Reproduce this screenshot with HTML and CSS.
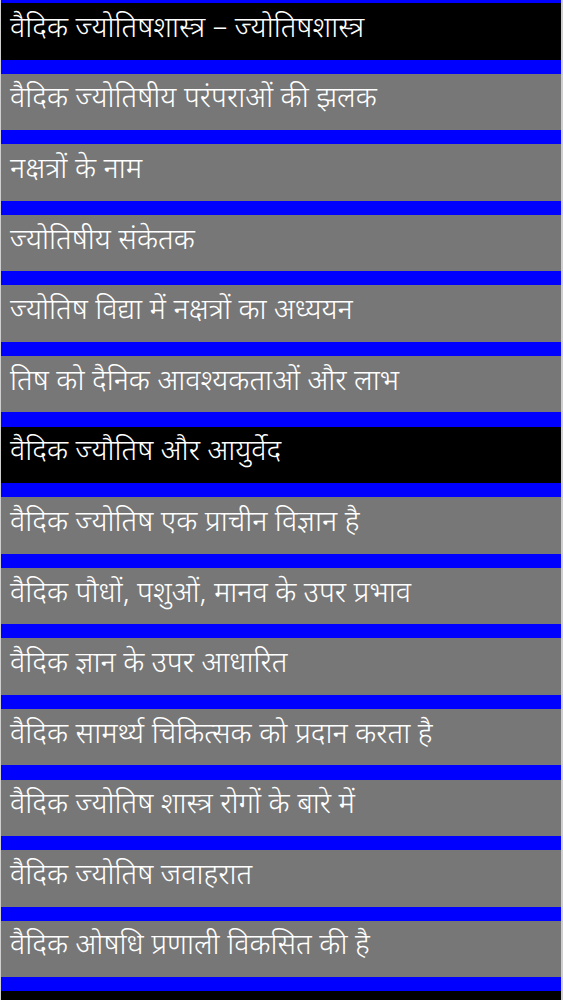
FILE: index.html
```html
<!DOCTYPE html>
<html lang="hi">
<head>
<meta charset="utf-8">
<title>वैदिक ज्योतिषशास्त्र</title>
<link rel="stylesheet" href="styles.css">
</head>
<body>
<ul class="topics">
  <li class="topic topic--section">वैदिक ज्योतिषशास्त्र – ज्योतिषशास्त्र</li>
  <li class="topic">वैदिक ज्योतिषीय परंपराओं की झलक</li>
  <li class="topic">नक्षत्रों के नाम</li>
  <li class="topic">ज्योतिषीय संकेतक</li>
  <li class="topic">ज्योतिष विद्या में नक्षत्रों का अध्ययन</li>
  <li class="topic">तिष को दैनिक आवश्यकताओं और लाभ</li>
  <li class="topic topic--section">वैदिक ज्यौतिष और आयुर्वेद</li>
  <li class="topic">वैदिक ज्योतिष एक प्राचीन विज्ञान है</li>
  <li class="topic">वैदिक पौधों, पशुओं, मानव के उपर प्रभाव</li>
  <li class="topic">वैदिक ज्ञान के उपर आधारित</li>
  <li class="topic">वैदिक सामर्थ्य चिकित्सक को प्रदान करता है</li>
  <li class="topic">वैदिक ज्योतिष शास्त्र रोगों के बारे में</li>
  <li class="topic">वैदिक ज्योतिष जवाहरात</li>
  <li class="topic">वैदिक ओषधि प्रणाली विकसित की है</li>
  <li class="topic topic--section topic--empty"></li>
</ul>
</body>
</html>
```
FILE: styles.css
```css
html, body {
  margin: 0;
  padding: 0;
  height: 100%;
  overflow: hidden;
}

body {
  background: #cfcfcf;
  font-family: "Noto Sans Devanagari", "Noto Sans", sans-serif;
}

.topics {
  list-style: none;
  margin: 0 2px 0 1px;
  padding: 3px 0 0;
  display: flex;
  flex-direction: column;
  gap: 14.1px;
  background: #0000fe;
  min-height: 1000px;
}

.topic {
  flex: none;
  height: 56.5px;
  display: flex;
  align-items: center;
  padding: 0 0 3px 9px;
  box-sizing: border-box;
  background: #777777;
  color: #ffffff;
  font-size: 29px;
  font-weight: 300;
  white-space: nowrap;
  overflow: hidden;
}

.topic--section {
  background: #000000;
}
```
